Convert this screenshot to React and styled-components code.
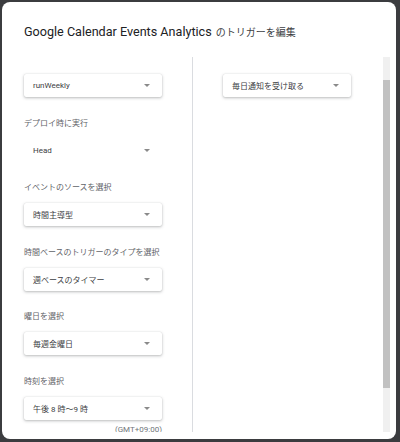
import React from "react";
import styled, { createGlobalStyle } from "styled-components";

const GlobalStyle = createGlobalStyle`
  html, body {
    margin: 0;
    padding: 0;
    background: #3b3c3f;
  }
  body {
    font-family: Roboto, "Noto Sans CJK JP", sans-serif;
  }
  * {
    box-sizing: border-box;
  }
`;

const Dialog = styled.div`
  margin: 2px 4px 3px 2px;
  width: 394px;
  height: 437px;
  background: #ffffff;
  border-radius: 8px;
  display: flex;
  flex-direction: column;
  overflow: hidden;
`;

const Header = styled.div`
  height: 55px;
  padding: 20px 0 0 22px;
  flex-shrink: 0;
`;

const Title = styled.h1`
  margin: 0;
  font-size: 12.6px;
  line-height: 20px;
  font-weight: 400;
  color: #202124;
  font-family: Roboto, "Noto Sans CJK JP", sans-serif;
`;

const TitleJa = styled.span`
  font-size: 10px;
  margin-left: 4px;
  color: #3c4043;
`;

const Body = styled.div`
  flex: 1;
  display: flex;
  margin: 0 6px 7px 0;
  min-height: 0;
`;

const Content = styled.div`
  flex: 1;
  overflow: hidden;
  display: flex;
`;

// drawn scrollbar (track + thumb)
const ScrollTrack = styled.div`
  width: 7px;
  background: #f0f0f0;
  flex-shrink: 0;
`;

const ScrollThumb = styled.div`
  margin-top: 23px;
  height: 308px;
  background: #c1c1c1;
`;

const Column = styled.div`
  width: ${(p) => p.width}px;
  padding: 17px 0 0 ${(p) => p.padLeft}px;
  border-right: ${(p) => (p.divider ? "1px solid #dadce0" : "none")};
  flex-shrink: 0;
`;

const Field = styled.div`
  margin-bottom: 20.5px;
`;

const Label = styled.div`
  font-size: 8px;
  line-height: 12px;
  height: 12px;
  color: #5f6368;
  margin-bottom: 9px;
  white-space: nowrap;
`;

const Select = styled.div`
  width: ${(p) => p.width}px;
  height: 23px;
  padding: 0 12px 0 9px;
  display: flex;
  align-items: center;
  justify-content: space-between;
  background: #ffffff;
  border-radius: 2px;
  box-shadow: ${(p) =>
    p.flat ? "none" : "0 1px 3px rgba(60, 64, 67, 0.35), 0 0 1px rgba(60, 64, 67, 0.2)"};
  font-size: 8px;
  color: #3c4043;
  white-space: nowrap;
`;

const Arrow = styled.span`
  width: 0;
  height: 0;
  border-left: 3px solid transparent;
  border-right: 3px solid transparent;
  border-top: 3px solid #8a8a8a;
`;

const Note = styled.div`
  width: 138px;
  margin-top: -16px;
  font-size: 8px;
  line-height: 12px;
  color: #70757a;
  text-align: right;
`;

const leftFields = [
  { value: "runWeekly" },
  { label: "デプロイ時に実行", value: "Head", flat: true },
  { label: "イベントのソースを選択", value: "時間主導型" },
  { label: "時間ベースのトリガーのタイプを選択", value: "週ベースのタイマー" },
  { label: "曜日を選択", value: "毎週金曜日" },
  { label: "時刻を選択", value: "午後 8 時〜9 時" },
];

const App = () => {
  return (
    <>
      <GlobalStyle />
      <Dialog>
        <Header>
          <Title>
            Google Calendar Events Analytics<TitleJa>のトリガーを編集</TitleJa>
          </Title>
        </Header>
        <Body>
          <Content>
            <Column width={191} padLeft={22} divider>
              {leftFields.map((f) => (
                <Field key={f.value}>
                  {f.label && <Label>{f.label}</Label>}
                  <Select width={138} flat={f.flat}>
                    <span>{f.value}</span>
                    <Arrow />
                  </Select>
                </Field>
              ))}
              <Note>(GMT+09:00)</Note>
            </Column>
            <Column width={190} padLeft={30}>
              <Field>
                <Select width={128}>
                  <span>毎日通知を受け取る</span>
                  <Arrow />
                </Select>
              </Field>
            </Column>
          </Content>
          <ScrollTrack>
            <ScrollThumb />
          </ScrollTrack>
        </Body>
      </Dialog>
    </>
  );
};

export default App;
